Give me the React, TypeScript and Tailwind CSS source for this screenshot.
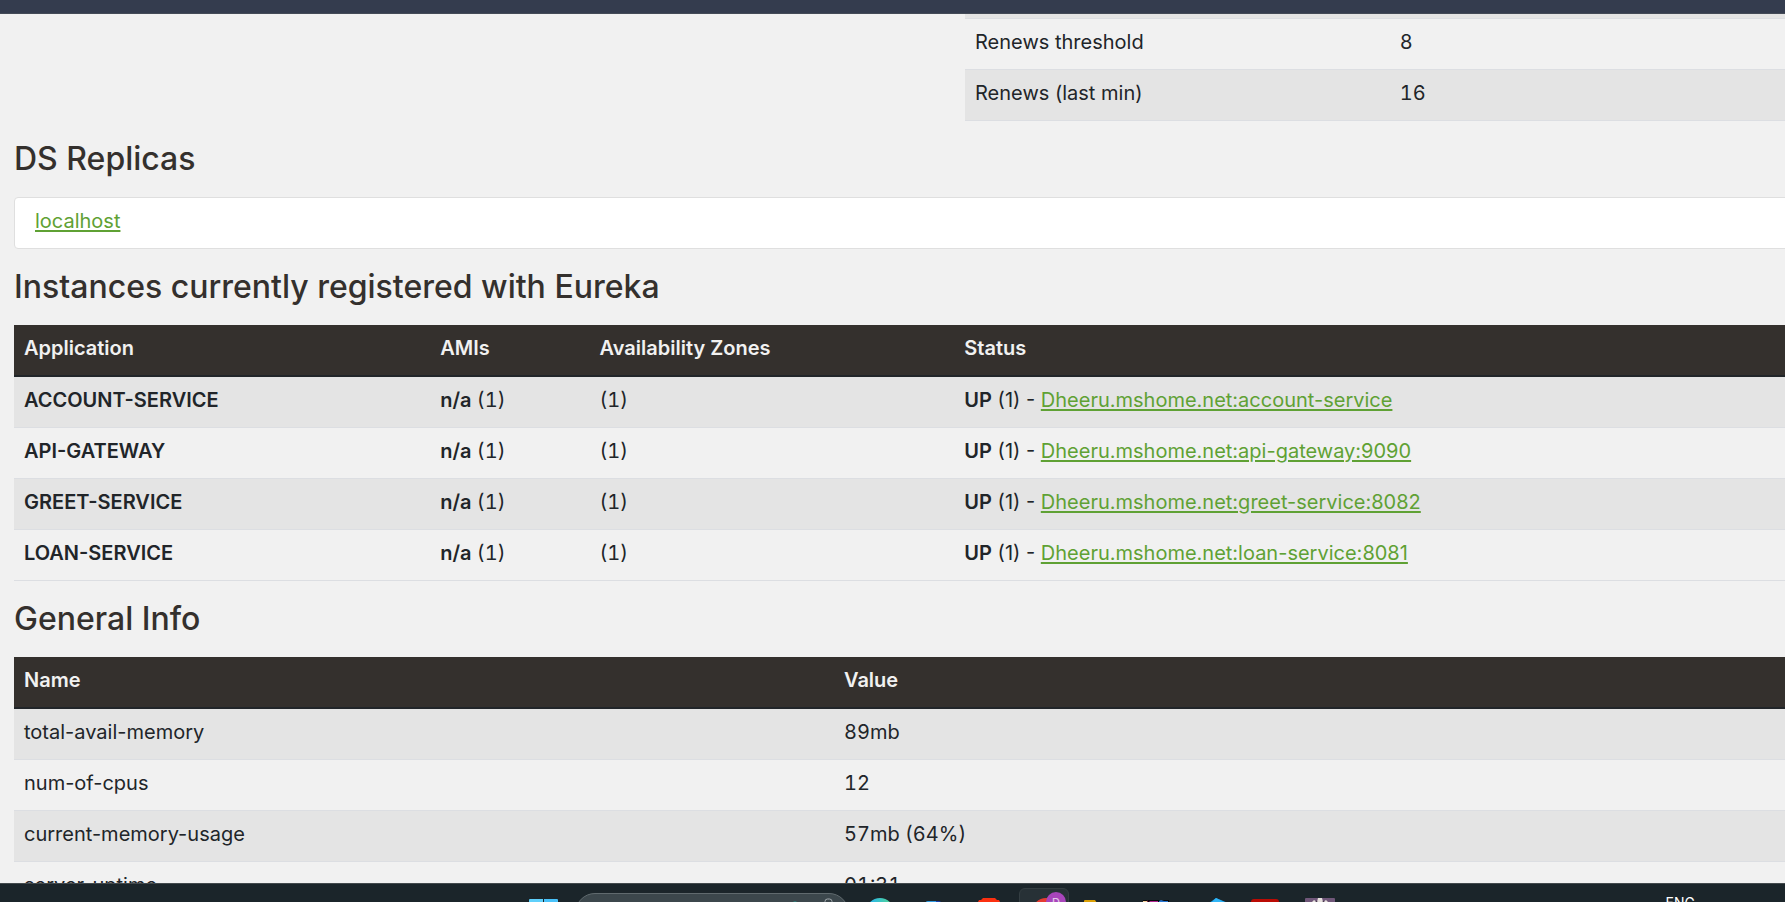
import type { ReactNode } from 'react';

const instances = [
  { name: 'ACCOUNT-SERVICE', id: 'Dheeru.mshome.net:account-service' },
  { name: 'API-GATEWAY', id: 'Dheeru.mshome.net:api-gateway:9090' },
  { name: 'GREET-SERVICE', id: 'Dheeru.mshome.net:greet-service:8082' },
  { name: 'LOAN-SERVICE', id: 'Dheeru.mshome.net:loan-service:8081' },
];

const generalInfo = [
  ['total-avail-memory', '89mb'],
  ['num-of-cpus', '12'],
  ['current-memory-usage', '57mb (64%)'],
  ['server-uptime', '01:31'],
];

const renewals = [
  ['Renews threshold', '8'],
  ['Renews (last min)', '16'],
];

function Heading({ children }: { children: ReactNode }) {
  return <h1 className="my-5 text-[32px] leading-9 font-medium text-[#34302d]">{children}</h1>;
}

function Th({ className = '', children }: { className?: string; children: ReactNode }) {
  return (
    <th className={`border-b-2 border-[#212529] bg-[#34302d] px-2.5 pt-2 pb-3 text-left font-semibold ${className}`}>{children}</th>
  );
}

function Td({ className = '', children }: { className?: string; children: ReactNode }) {
  return <td className={`border-b border-[#dcdee2] px-2.5 pt-2 pb-3 ${className}`}>{children}</td>;
}

function StripedRow({ children }: { children: ReactNode }) {
  return <tr className="odd:bg-[#e4e4e4]">{children}</tr>;
}

const tableClass = 'w-full table-fixed border-separate border-spacing-0';

function Taskbar() {
  return (
    <footer className="flex h-[19px] shrink-0 items-start overflow-hidden border-t border-[#434a4d] bg-[#1b252a] pl-[529px]">
      <button aria-label="Start" className="mt-[15px] mr-[17px] block shrink-0">
        <svg width="29" height="29" viewBox="0 0 29 29">
          <path d="M0 1q0-1 1-1h13v14H0z" fill="#5fd0fb" />
          <path d="M15 0h13q1 0 1 1v13H15z" fill="#49c2fa" />
          <path d="M0 15h14v14H0zM15 15h14v14H15z" fill="#2aa5ee" />
        </svg>
      </button>
      <button aria-label="Search" className="mt-[9px] flex h-10 w-[274px] shrink-0 justify-end rounded-full border border-[#606a6e] bg-[#3c474c] pr-[14px]">
        <svg width="44" height="30" viewBox="0 0 44 30">
          <circle cx="5" cy="13" r="5.500" fill="#23b5a5" />
          <rect x="35" y="5" width="7" height="12" rx="2.500" fill="none" stroke="#a3abae" />
        </svg>
      </button>
      <svg className="mt-3.5 ml-[17px] shrink-0" width="28" height="28" viewBox="0 0 28 28">
        <defs>
          <linearGradient id="edge">
            <stop offset="0.2" stopColor="#2cb9e4" />
            <stop offset="1" stopColor="#57d98c" />
          </linearGradient>
        </defs>
        <circle cx="14" cy="14" r="14" fill="url(#edge)" />
      </svg>
      <svg className="mt-4 ml-[31px] shrink-0" width="20" height="24" viewBox="0 0 20 24">
        <path d="M1 2q0-1 2-1h10l3 2v20H1z" fill="#2f9be0" />
        <path d="M11 1h3q3 1 4 3v19h-5z" fill="#173db0" />
      </svg>
      <svg className="mt-3.5 ml-8 shrink-0" width="24" height="28" viewBox="0 0 24 28">
        <path d="M6 0h12l2 2h2l2 4-3 16-9 6-9-6L0 6l2-4h2z" fill="#fb3010" />
      </svg>
      <div className="relative mt-1 ml-[18px] h-12 w-[50px] shrink-0 rounded-md border border-[#343e42] bg-[#273136]">
        <svg className="mt-[9px] ml-3" width="28" height="28" viewBox="0 0 28 28">
          <circle cx="14" cy="14" r="14" fill="#e53b31" />
        </svg>
        <span className="absolute top-[3px] left-[26px] flex h-5 w-5 items-center justify-center rounded-full bg-[#a845bb] text-[11px] font-medium text-[#e2c5e8]">
          D
        </span>
      </div>
      <svg className="mt-4 ml-[15px] shrink-0" width="28" height="22" viewBox="0 0 28 22">
        <path d="M0 1q0-1 1-1h10l2 3h15v19H0z" fill="#dba005" />
      </svg>
      <svg className="mt-4 ml-[31px] shrink-0" width="26" height="26" viewBox="0 0 26 26">
        <rect width="26" height="26" fill="#07090c" />
        <path d="M0 1h4v25H0z" fill="#f2cf9a" />
        <path d="M4 0l9 26H4z" fill="#f03a77" />
        <path d="M6 1h9v8z" fill="#b22792" />
        <path d="M16 1l2-1 3 1h4v25H14z" fill="#2675d0" />
      </svg>
      <svg className="mt-3.5 ml-[38px] shrink-0" width="28" height="28" viewBox="0 0 28 28">
        <path d="M9 0l12 5v18l-10 5L-2 8z" fill="#179ce8" />
        <path d="M9 0l8 4-9 4-4-3z" fill="#31b5f6" />
      </svg>
      <svg className="mt-[15px] ml-4 shrink-0" width="28" height="28" viewBox="0 0 28 28">
        <rect width="28" height="28" rx="3" fill="#bb0b04" />
      </svg>
      <svg className="mt-3.5 ml-[26px] shrink-0" width="30" height="28" viewBox="0 0 30 28">
        <rect width="30" height="28" rx="1" fill="#705779" />
        <path d="M6 5l3-3 3 2 1-4h4l1 4 3-2 3 3-3 14H9z" fill="#e8e2df" />
        <path d="M11 3l2 3M19 3l-2 3" stroke="#4a3b50" strokeWidth="1.500" />
      </svg>
      <span className="mt-[11px] mr-[90px] ml-auto text-[14px] leading-4 text-white">ENG</span>
    </footer>
  );
}

export default function App() {
  return (
    <div className="flex h-screen flex-col overflow-hidden bg-[#f1f1f1] font-['Inter',sans-serif] text-[20px] leading-[30px] text-[#212529]">
      <header className="h-3.5 shrink-0 border-b border-[#444b57] bg-[#343c4e]" />

      <main className="min-h-0 flex-1 overflow-hidden pl-3.5">
        <div className="ml-auto w-[46.3%]">
          <div className="h-[5px] border-b border-[#dcdee2] bg-[#e4e4e4]" />
          <table className={tableClass}>
            <tbody>
              {renewals.map(([name, value]) => (
                <tr key={name} className="even:bg-[#e4e4e4]">
                  <Td className="w-[51.8%]">{name}</Td>
                  <Td className="tabular-nums">{value}</Td>
                </tr>
              ))}
            </tbody>
          </table>
        </div>

        <Heading>DS Replicas</Heading>
        <ul className="-mr-2">
          <li className="rounded border border-[#dfdfdf] bg-white px-5 pt-2 pb-3">
            <a href="#localhost" className="text-[#5fa134] underline decoration-2 underline-offset-2">localhost</a>
          </li>
        </ul>

        <Heading>Instances currently registered with Eureka</Heading>
        <table className={tableClass}>
          <thead className="text-[#f1f1f1]">
            <tr>
              <Th className="w-[23.5%]">Application</Th>
              <Th className="w-[9%]">AMIs</Th>
              <Th className="w-[20.6%]">Availability Zones</Th>
              <Th>Status</Th>
            </tr>
          </thead>
          <tbody>
            {instances.map(({ name, id }) => (
              <StripedRow key={name}>
                <Td className="font-semibold">{name}</Td>
                <Td className="tabular-nums"><b className="font-semibold">n/a</b> (1)</Td>
                <Td className="tabular-nums">(1)</Td>
                <Td>
                  <b className="font-semibold">UP</b> (1) -{' '}
                  <a href={`#${id}`} className="text-[#5fa134] underline decoration-2 underline-offset-2">{id}</a>
                </Td>
              </StripedRow>
            ))}
          </tbody>
        </table>

        <Heading>General Info</Heading>
        <table className={tableClass}>
          <thead className="text-[#f1f1f1]">
            <tr>
              <Th className="w-[46.3%]">Name</Th>
              <Th>Value</Th>
            </tr>
          </thead>
          <tbody>
            {generalInfo.map(([name, value]) => (
              <StripedRow key={name}>
                <Td>{name}</Td>
                <Td className="tabular-nums">{value}</Td>
              </StripedRow>
            ))}
          </tbody>
        </table>
      </main>

      <Taskbar />
    </div>
  );
}
